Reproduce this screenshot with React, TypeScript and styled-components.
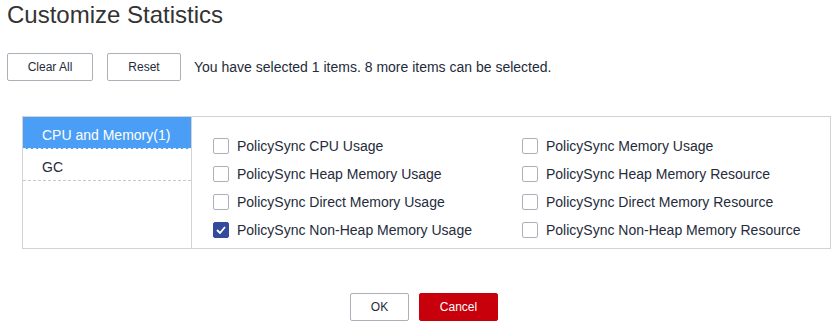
import React from "react";
import styled, { createGlobalStyle, css } from "styled-components";

const GlobalStyle = createGlobalStyle`
  html, body {
    margin: 0;
    padding: 0;
    background: #ffffff;
    overflow: hidden;
  }
  body {
    font-family: "Liberation Sans", Arial, sans-serif;
    color: #252b3a;
  }
`;

const Page = styled.div`
  width: 834px;
  padding: 1px 0 0 7px;
`;

const Title = styled.h2`
  margin: 0;
  font-size: 24px;
  line-height: 28px;
  font-weight: 400;
  color: #333333;
`;

const Toolbar = styled.div`
  display: flex;
  align-items: center;
  gap: 14px;
  margin-top: 24px;
`;

const Hint = styled.span`
  font-size: 14px;
  color: #252b3a;
  margin-left: -1px;
`;

const Button = styled.button<{ $width: number; $primary?: boolean }>`
  box-sizing: border-box;
  width: ${(p) => p.$width}px;
  height: 28px;
  padding: 0;
  border: 1px solid #adb0b8;
  border-radius: 2px;
  background: #ffffff;
  color: #252b3a;
  font-family: inherit;
  font-size: 12px;
  cursor: pointer;

  ${(p) =>
    p.$primary &&
    css`
      border-color: #c7000b;
      background: #c7000b;
      color: #ffffff;
    `}
`;

const Panel = styled.div`
  box-sizing: border-box;
  display: flex;
  width: 809px;
  height: 133px;
  margin: 35px 0 0 15px;
  border: 1px solid #d3d3d3;
`;

const Nav = styled.ul`
  list-style: none;
  margin: 0;
  padding: 0;
  width: 168px;
  border-right: 1px solid #d3d3d3;
`;

const NavItem = styled.li<{ $active?: boolean }>`
  height: 25px;
  padding: 6px 20px 0 19px;
  line-height: 25px;
  font-size: 14px;
  border-bottom: 1px dashed #c8c8c8;
  color: #252b3a;
  cursor: pointer;

  ${(p) =>
    p.$active &&
    css`
      background: #4a9ef5;
      color: #ffffff;
      border-bottom-color: #e6f1fd;
    `}
`;

const Options = styled.div`
  display: grid;
  grid-template-columns: 309px 1fr;
  grid-auto-rows: 28px;
  align-content: start;
  flex: 1;
  padding: 15px 0 0 21px;
`;

const Option = styled.label`
  display: flex;
  align-items: center;
  gap: 8px;
  font-size: 14px;
  color: #252b3a;
  white-space: nowrap;
  cursor: pointer;
`;

const Box = styled.span<{ $checked?: boolean }>`
  box-sizing: border-box;
  display: inline-flex;
  align-items: center;
  justify-content: center;
  width: 16px;
  height: 16px;
  border: 1px solid #adb0b8;
  border-radius: 2px;
  background: #ffffff;

  ${(p) =>
    p.$checked &&
    css`
      border-color: #344a9d;
      background: #344a9d;
    `}
`;

const Footer = styled.div`
  display: flex;
  justify-content: center;
  gap: 10px;
  margin-top: 44px;
`;

const options = [
  { label: "PolicySync CPU Usage", checked: false },
  { label: "PolicySync Memory Usage", checked: false },
  { label: "PolicySync Heap Memory Usage", checked: false },
  { label: "PolicySync Heap Memory Resource", checked: false },
  { label: "PolicySync Direct Memory Usage", checked: false },
  { label: "PolicySync Direct Memory Resource", checked: false },
  { label: "PolicySync Non-Heap Memory Usage", checked: true },
  { label: "PolicySync Non-Heap Memory Resource", checked: false },
];

function Check({ checked }: { checked: boolean }) {
  return (
    <Box $checked={checked}>
      {checked && (
        <svg width="10" height="8" viewBox="0 0 10 8">
          <path
            d="M1 4 L4 7 L9 1"
            fill="none"
            stroke="#ffffff"
            strokeWidth="1.8"
          />
        </svg>
      )}
    </Box>
  );
}

export default function App() {
  return (
    <Page>
      <GlobalStyle />
      <Title>Customize Statistics</Title>

      <Toolbar>
        <Button $width={86}>Clear All</Button>
        <Button $width={74}>Reset</Button>
        <Hint>You have selected 1 items. 8 more items can be selected.</Hint>
      </Toolbar>

      <Panel>
        <Nav>
          <NavItem $active>CPU and Memory(1)</NavItem>
          <NavItem>GC</NavItem>
        </Nav>
        <Options>
          {options.map((o) => (
            <Option key={o.label}>
              <Check checked={o.checked} />
              {o.label}
            </Option>
          ))}
        </Options>
      </Panel>

      <Footer>
        <Button $width={59}>OK</Button>
        <Button $width={79} $primary>
          Cancel
        </Button>
      </Footer>
    </Page>
  );
}
